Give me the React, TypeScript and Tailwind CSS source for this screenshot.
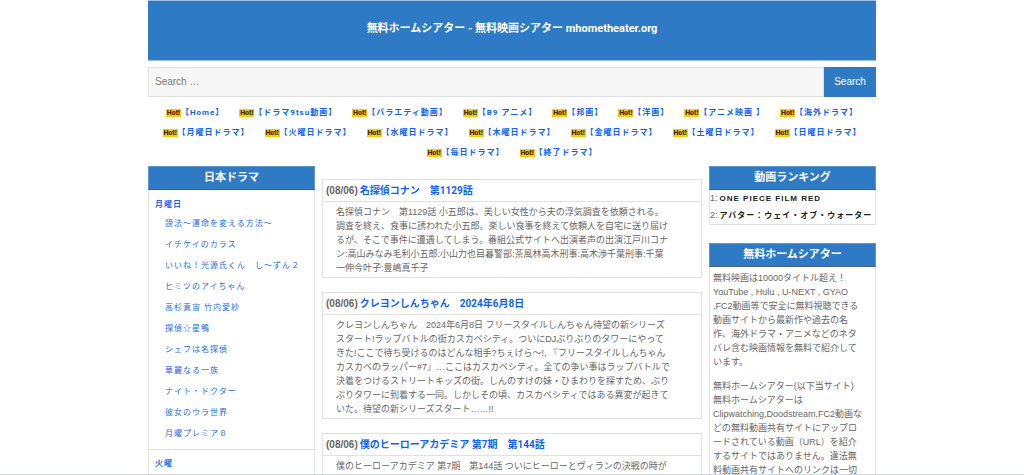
const menuRows = [
  ["Home", "ドラマ9tsu動画", "バラエティ動画", "B9 アニメ", "邦画", "洋画", "アニメ映画 ", "海外ドラマ"],
  ["月曜日ドラマ", "火曜日ドラマ", "水曜日ドラマ", "木曜日ドラマ", "金曜日ドラマ", "土曜日ドラマ", "日曜日ドラマ"],
  ["毎日ドラマ", "終了ドラマ"],
]

const mondayDramas = [
  "謗法～運命を変える方法～",
  "イチケイのカラス",
  "いいね！光源氏くん　し～ずん２",
  "ヒミツのアイちゃん",
  "高杉真宙 竹内愛紗",
  "探偵☆星鴨",
  "シェフは名探偵",
  "華麗なる一族",
  "ナイト・ドクター",
  "彼女のウラ世界",
  "月曜プレミア８",
]

const posts = [
  {
    date: "08/06",
    title: "名探偵コナン　第1129話",
    body: "名探偵コナン　第1129話 小五郎は、美しい女性から夫の浮気調査を依頼される。調査を終え、食事に誘われた小五郎。楽しい食事を終えて依頼人を自宅に送り届けるが、そこで事件に遭遇してしまう。番組公式サイトへ出演者声の出演江戸川コナン:高山みなみ毛利小五郎:小山力也目暮警部:茶風林高木刑事:高木渉千葉刑事:千葉一伸今叶子:豊嶋真千子",
  },
  {
    date: "08/06",
    title: "クレヨンしんちゃん　2024年6月8日",
    body: "クレヨンしんちゃん　2024年6月8日 フリースタイルしんちゃん待望の新シリーズスタート!ラップバトルの街カスカベシティ。ついにDJぶりぶりのタワーにやってきた!ここで待ち受けるのはどんな相手?ちぇけら～!, 『フリースタイルしんちゃんカスカベのラッパー#7』…ここはカスカベシティ。全ての争い事はラップバトルで決着をつけるストリートキッズの街。しんのすけの妹・ひまわりを探すため、ぶりぶりタワーに到着する一同。しかしその頃、カスカベシティではある異変が起きていた。待望の新シリーズスタート……!!",
  },
  {
    date: "08/06",
    title: "僕のヒーローアカデミア 第7期　第144話",
    body: "僕のヒーローアカデミア 第7期　第144話 ついにヒーローとヴィランの決戦の時が",
  },
]

const ranking = ["ONE PIECE FILM RED", "アバター：ウェイ・オブ・ウォーター"]

function PanelHeading({ children }: { children: string }) {
  return (
    <h2 className="border border-[#5c97d2] border-b-[#4a6076] bg-[#2f7ac5] text-center font-[Roboto,'Noto_Sans_CJK_JP',sans-serif] text-[11px] leading-[22px] font-bold text-white">
      {children}
    </h2>
  )
}

function Menu() {
  return (
    <nav className="mt-[6px] font-[Roboto,'Noto_Sans_CJK_JP',sans-serif]">
      {menuRows.map((row) => (
        <ul key={row[0]} className="flex justify-center gap-[15px]">
          {row.map((label) => (
            <li key={label} className="flex h-5 items-center">
              <span className="flex h-2 w-[15px] items-center justify-center bg-[#fccb10] text-[7px] font-black text-[#3c2b00]">
                Hot!
              </span>
              <a href="#" className="text-[8px] font-bold tracking-[1px] whitespace-pre text-[#0f62f5]">
                【{label}】
              </a>
            </li>
          ))}
        </ul>
      ))}
    </nav>
  )
}

function DramaList() {
  return (
    <aside className="w-[167px] shrink-0">
      <PanelHeading>日本ドラマ</PanelHeading>
      <div className="border-x border-[#e2e2e2] font-[Roboto,'Noto_Sans_CJK_JP',sans-serif] text-[8px] tracking-[1px] text-[#1f6bf0]">
        <section className="border-b border-[#e2e2e2] px-[6px] pt-[7px] pb-[5px]">
          <h3 className="leading-[16px] font-bold">
            <a href="#">月曜日</a>
          </h3>
          <ul className="pl-[10px]">
            {mondayDramas.map((name) => (
              <li key={name} className="leading-[21px]">
                <a href="#">{name}</a>
              </li>
            ))}
          </ul>
        </section>
        <section className="px-[6px] py-[6px]">
          <h3 className="leading-[16px] font-bold">
            <a href="#">火曜</a>
          </h3>
        </section>
      </div>
    </aside>
  )
}

function Posts() {
  return (
    <main className="flex min-w-0 flex-1 flex-col gap-[14px] pt-[13px]">
      {posts.map((post) => (
        <article key={post.title} className="border border-[#e2e2e2]">
          <h2 className="flex gap-[2px] border-b border-[#e2e2e2] px-[3px] text-[10px] leading-[21px] font-bold">
            <span>({post.date})</span>
            <a href="#" className="font-[Roboto,'Noto_Sans_CJK_JP',sans-serif] text-[#0f62f5]">
              {post.title}
            </a>
          </h2>
          <p className="pt-[3px] pr-[30px] pb-[2px] pl-[13px]">{post.body}</p>
        </article>
      ))}
    </main>
  )
}

function Ranking() {
  return (
    <aside className="flex w-[167px] shrink-0 flex-col gap-[18px]">
      <section>
        <PanelHeading>動画ランキング</PanelHeading>
        <ol className="border border-t-0 border-[#e2e2e2]">
          {ranking.map((title, index) => (
            <li key={title} className="flex gap-[2px] leading-[17px] whitespace-nowrap">
              <span>{index + 1}:</span>
              <a href="#" className="text-[8px] font-bold tracking-[1px] text-[#222222]">
                {title}
              </a>
            </li>
          ))}
        </ol>
      </section>
      <section>
        <PanelHeading>無料ホームシアター</PanelHeading>
        <div className="flex flex-col gap-[10px] border-x border-[#e2e2e2] py-[4px] pr-[12px] pl-[3px]">
          <p>
            無料映画は10000タイトル超え！ YouTube , Hulu , U-NEXT , GYAO
            ,FC2動画等で安全に無料視聴できる動画サイトから最新作や過去の名作、海外ドラマ・アニメなどのネタバレ含む映画情報を無料で紹介しています。
          </p>
          <p>
            無料ホームシアター(以下当サイト)
            <br />
            無料ホームシアターは
            <br />
            Clipwatching,Doodstream,FC2動画などの無料動画共有サイトにアップロードされている動画（URL）を紹介するサイトではありません。違法無料動画共有サイトへのリンクは一切
          </p>
        </div>
      </section>
    </aside>
  )
}

export default function App() {
  return (
    <div
      lang="ja"
      className="h-screen overflow-hidden border-b border-[#d6d8de] bg-white font-['Liberation_Sans','Noto_Sans_CJK_JP',sans-serif] text-[9px] leading-[14px] text-[#666666]"
    >
      <div className="mx-auto max-w-[728px]">
        <header className="flex h-[61px] items-center justify-center border-y border-[#9dc0e3] bg-[#2f7ac5] pb-[4px]">
          <h1 className="font-[Roboto,'Noto_Sans_CJK_JP',sans-serif] text-[11px] font-bold text-white">
            無料ホームシアター - 無料映画シアター mhometheater.org
          </h1>
        </header>
        <form className="mt-[6px] flex h-[30px]">
          <input
            type="search"
            aria-label="Search"
            placeholder="Search …"
            className="min-w-0 flex-1 border border-[#e2e2e2] bg-[#f7f7f7] px-[6px] text-[10px] placeholder:text-[#777777]"
          />
          <button type="button" className="w-[52px] bg-[#2f7ac5] text-[10px] text-white">
            Search
          </button>
        </form>
        <Menu />
        <div className="mt-[3px] flex items-start gap-[7px]">
          <DramaList />
          <Posts />
          <Ranking />
        </div>
      </div>
    </div>
  )
}
